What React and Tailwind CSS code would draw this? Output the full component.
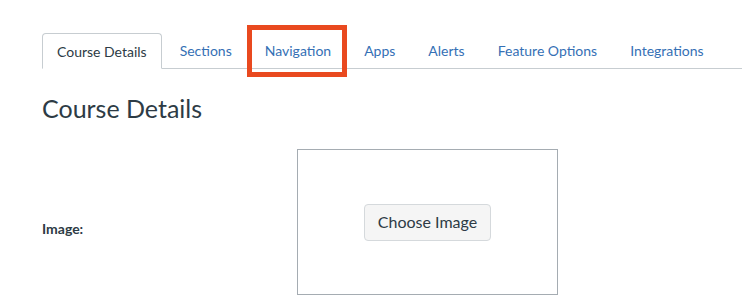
import React from "react";

const tabs = [
  { label: "Course Details", active: true },
  { label: "Sections" },
  { label: "Navigation", highlight: true },
  { label: "Apps" },
  { label: "Alerts" },
  { label: "Feature Options" },
  { label: "Integrations" },
];

const App = () => {
  return (
    <div className="min-h-[306px] bg-white pl-[42px] pt-[33px] font-['Lato','Liberation_Sans',sans-serif] text-[#2d3b45]">
      {/* Tabs */}
      <ul className="flex items-end gap-[3px] border-b border-[#c7cdd1]">
        {tabs.map((tab) => (
          <li
            key={tab.label}
            className={
              tab.active
                ? "-mb-px h-[36px] rounded-t-[4px] border border-b-white border-[#c7cdd1] bg-white px-[14px] pt-[8px] text-[14px] leading-[20px] text-[#2d3b45]"
                : "relative h-[35px] px-[15px] pt-[8px] text-[14px] leading-[20px] text-[#3570b5]"
            }
          >
            {tab.label}
            {tab.highlight && (
              <span className="pointer-events-none absolute left-[-3px] top-[-8px] h-[52px] w-[100px] border-[5px] border-[#e9491f]" />
            )}
          </li>
        ))}
      </ul>

      {/* Heading */}
      <h1 className="mt-[23px] text-[25px] font-normal leading-[32px]">Course Details</h1>

      {/* Image row */}
      <div className="mt-[25px] flex items-center">
        <label className="w-[255px] pt-[12px] text-[14px] font-bold">Image:</label>
        <div className="flex h-[146px] w-[261px] items-center justify-center border border-[#a5acb2]">
          <button className="h-[37px] rounded-[4px] border border-[#d5d9dc] bg-[#f5f5f5] px-[13px] text-[16px] text-[#2d3b45]">
            Choose Image
          </button>
        </div>
      </div>
    </div>
  );
};

export default App;
